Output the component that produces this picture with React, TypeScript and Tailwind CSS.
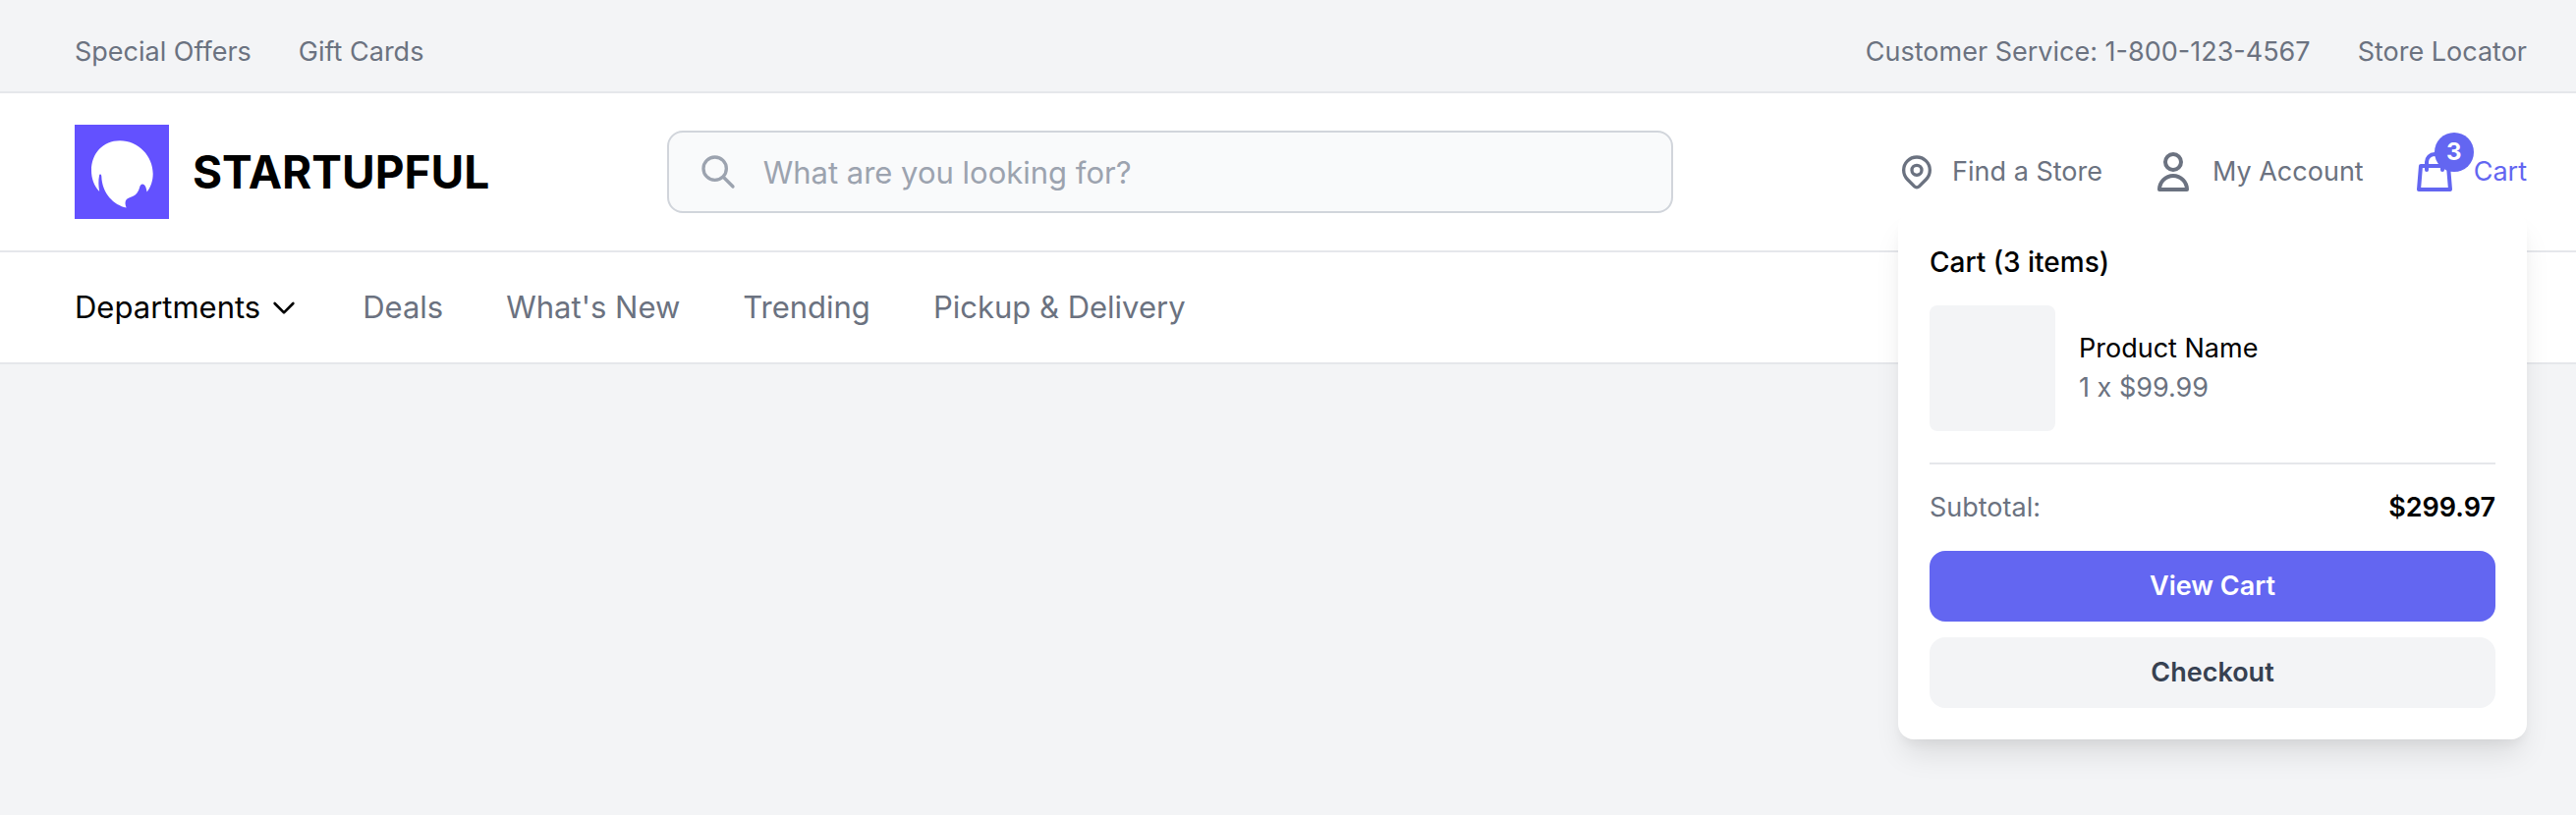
import React from "react";

const topLinks = ["Special Offers", "Gift Cards"];
const supportLinks = ["Customer Service: 1-800-123-4567", "Store Locator"];
const navLinks = ["Deals", "What's New", "Trending", "Pickup & Delivery"];

/** Outline icon on a 24px grid, drawn in the current text colour. */
function Icon({ d, className }: { d: string; className: string }) {
  return (
    <svg
      viewBox="0 0 24 24"
      className={className}
      fill="none"
      stroke="currentColor"
      strokeWidth="2"
      strokeLinecap="round"
      strokeLinejoin="round"
      aria-hidden="true"
    >
      <path d={d} />
    </svg>
  );
}

const icons = {
  search: "M21 21l-6-6m2-5a7 7 0 11-14 0 7 7 0 0114 0z",
  pin: "M17.657 16.657L13.414 20.9a1.998 1.998 0 01-2.827 0l-4.244-4.243a8 8 0 1111.314 0zM15 11a3 3 0 11-6 0 3 3 0 016 0z",
  user: "M16 7a4 4 0 11-8 0 4 4 0 018 0zM12 14a7 7 0 00-7 7h14a7 7 0 00-7-7z",
  bag: "M16 11V7a4 4 0 00-8 0v4M5 9h14l1 12H4L5 9z",
  chevron: "M19 9l-7 7-7-7",
};

function Logo() {
  return (
    <a href="#" className="flex items-center gap-6">
      <svg viewBox="0 0 96 96" className="size-24" aria-hidden="true">
        <rect width="96" height="96" fill="#6351ff" />
        <path
          fill="#fff"
          d="M25.2 68C19.5 62 17 54.5 17 46.5C17 29 29 16.2 46 16.2C65 16.2 79.7 32 79.7 50C79.7 57 77.5 63.5 73.6 68.5C73 64.5 71.8 60.4 69 60.4C66.2 60.4 66.3 64.5 65 67C63 71 60 73 56.5 74C51.5 75.5 50.5 79 52.6 84.5C40 82 27.8 70 27.3 52.5C27 50 25.3 50 25 52C24 57 24.3 62.5 25.2 68Z"
        />
      </svg>
      <span className="text-[46px] font-bold text-black">STARTUPFUL</span>
    </a>
  );
}

function CartDropdown() {
  return (
    <section
      aria-label="Cart"
      className="absolute top-full right-0 z-10 w-[640px] rounded-2xl bg-white p-8 shadow-[0_20px_30px_-6px_rgba(0,0,0,0.1),0_8px_12px_-4px_rgba(0,0,0,0.05)]"
    >
      <h2 className="mb-6 text-[28px] font-medium text-black">
        Cart (3 items)
      </h2>
      <div className="mb-8 flex items-center gap-6">
        <div className="size-32 rounded-lg bg-[#f3f4f6]" />
        <div>
          <p className="text-black">Product Name</p>
          <p>1 x $99.99</p>
        </div>
      </div>
      <div className="border-t-2 border-[#e5e7eb] pt-6">
        <div className="mb-6 flex justify-between">
          <span>Subtotal:</span>
          <span className="font-semibold text-black">$299.97</span>
        </div>
        <div className="flex flex-col gap-4 font-semibold">
          <button className="rounded-2xl bg-[#6366f1] py-4 text-white">
            View Cart
          </button>
          <button className="rounded-2xl bg-[#f3f4f6] py-4 text-[#374151]">
            Checkout
          </button>
        </div>
      </div>
    </section>
  );
}

export default function App() {
  return (
    <div className="min-h-screen bg-[#f3f4f6] font-['Inter',sans-serif] text-[27px] leading-10 text-[#6b7280]">
      <div className="flex justify-between border-b-2 border-[#e5e7eb] pt-[33px] pr-[50px] pb-5 pl-[76px]">
        <div className="flex gap-12">
          {topLinks.map((label) => (
            <a key={label} href="#">
              {label}
            </a>
          ))}
        </div>
        <div className="flex gap-12">
          {supportLinks.map((label) => (
            <a key={label} href="#">
              {label}
            </a>
          ))}
        </div>
      </div>

      <header className="flex items-center justify-between border-b-2 border-[#e5e7eb] bg-white py-8 pr-[50px] pl-[76px]">
        <Logo />

        <div className="relative flex w-full max-w-[1024px] items-center">
          <Icon
            d={icons.search}
            className="absolute left-8 size-10 text-[#9ca3af]"
          />
          <input
            type="search"
            aria-label="Search products"
            placeholder="What are you looking for?"
            className="h-[84px] w-full rounded-2xl border-2 border-[#d1d5db] bg-[#f9fafb] pr-8 pl-24 text-[31px] placeholder:text-[#9ca3af]"
          />
        </div>

        <div className="relative flex h-20 items-center gap-12 pl-12">
          <a href="#" className="flex items-center gap-4">
            <Icon d={icons.pin} className="size-10" />
            Find a Store
          </a>
          <a href="#" className="flex items-center gap-4">
            <Icon d={icons.user} className="size-12" />
            My Account
          </a>
          <button className="flex items-center gap-4 text-[#6366f1]">
            <span className="relative">
              <Icon d={icons.bag} className="size-12" />
              <span className="absolute -top-4 -right-4 flex size-10 items-center justify-center rounded-full bg-[#6366f1] text-2xl font-bold text-white">
                3
              </span>
            </span>
            Cart
          </button>
          <CartDropdown />
        </div>
      </header>

      <nav className="flex gap-16 border-b-2 border-[#e5e7eb] bg-white py-8 pr-[50px] pl-[76px] text-[31px] leading-[48px]">
        <button className="flex items-center gap-2 text-black">
          Departments
          <Icon d={icons.chevron} className="size-8" />
        </button>
        {navLinks.map((label) => (
          <a key={label} href="#">
            {label}
          </a>
        ))}
      </nav>
    </div>
  );
}
